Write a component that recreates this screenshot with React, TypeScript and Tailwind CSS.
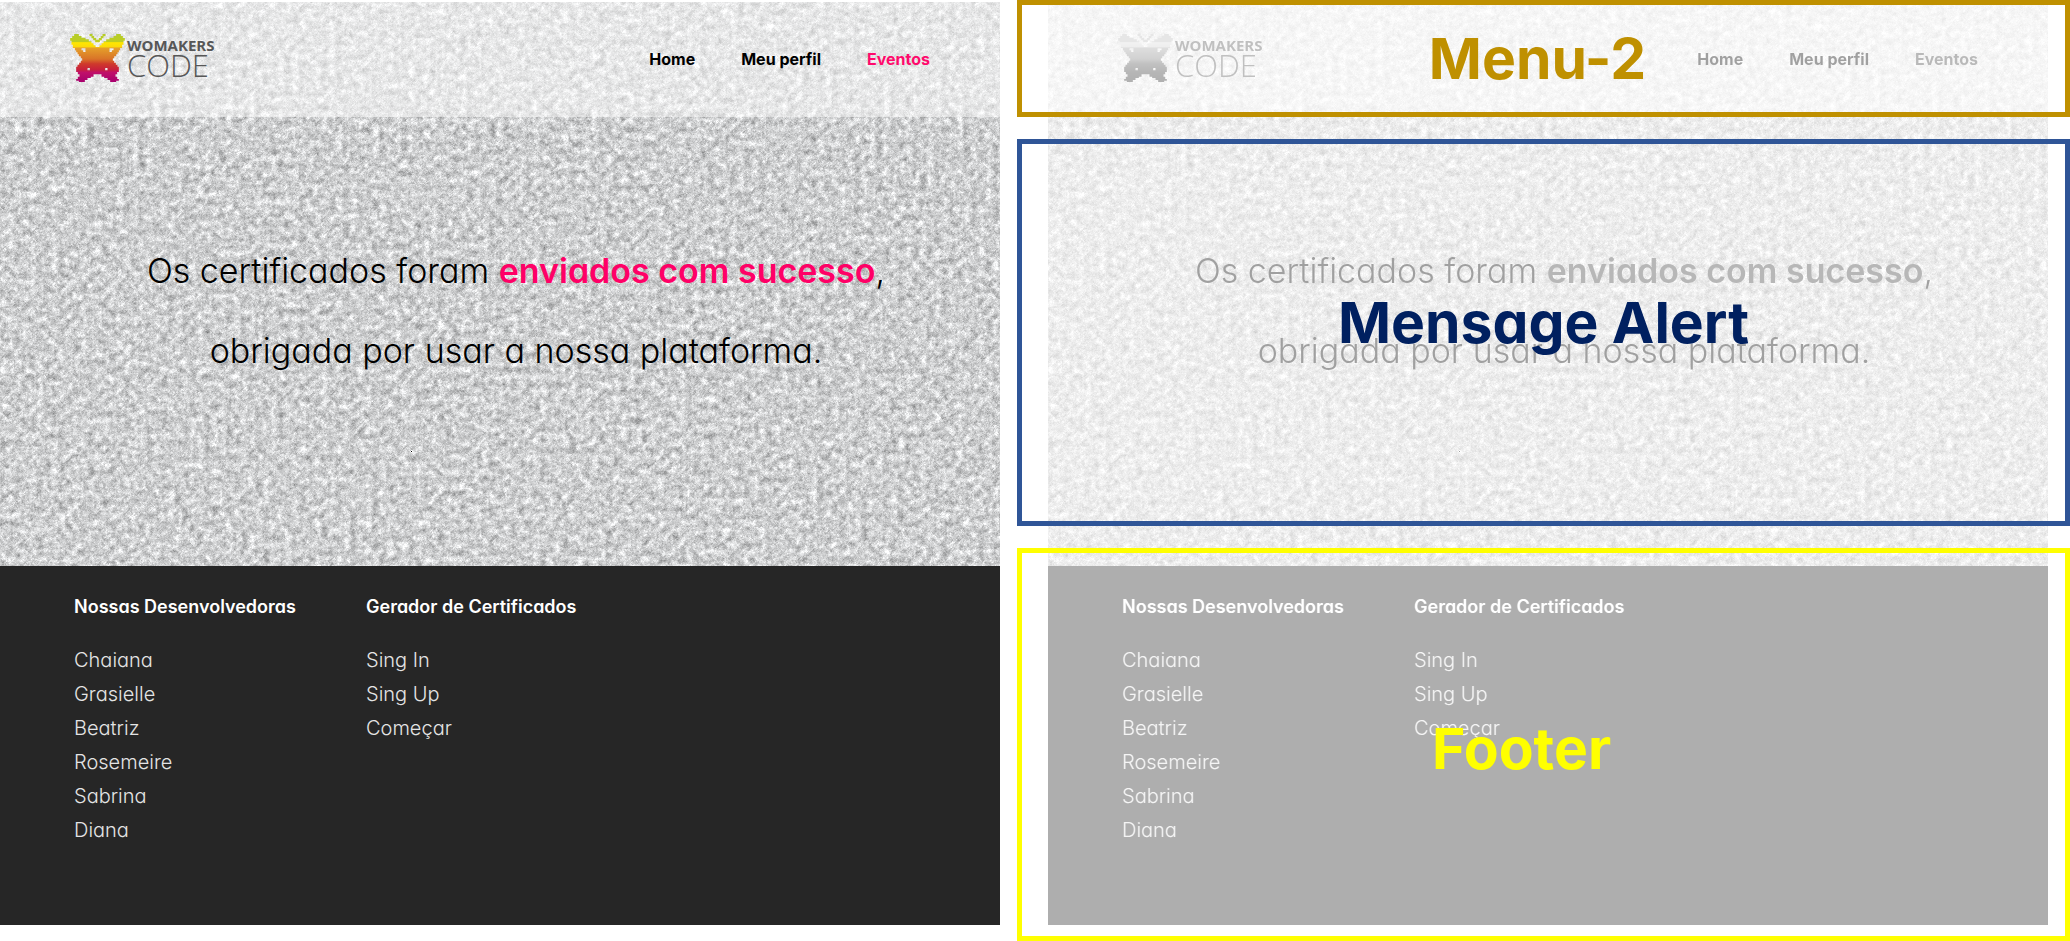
import { useId } from 'react';

const developers = ['Chaiana', 'Grasielle', 'Beatriz', 'Rosemeire', 'Sabrina', 'Diana'];
const generatorLinks = ['Sing In', 'Sing Up', 'Começar'];

function Texture() {
  const id = useId();
  return (
    <svg className="absolute inset-0 size-full" aria-hidden="true">
      <filter id={id} x="0" y="0" width="100%" height="100%" colorInterpolationFilters="sRGB">
        <feTurbulence type="fractalNoise" baseFrequency="0.137" numOctaves="4" seed="11" />
        <feColorMatrix values="0.3 0.3 0 0 0.508  0.3 0.3 0 0 0.512  0.3 0.3 0 0 0.516  0 0 0 0 1" />
        <feConvolveMatrix order="3" kernelMatrix="0 -0.6 0 -0.6 3.4 -0.6 0 -0.6 0" preserveAlpha="true" />
      </filter>
      <rect width="100%" height="100%" filter={`url(#${id})`} />
    </svg>
  );
}

function Butterfly() {
  const id = useId();
  return (
    <svg className="h-12 w-[55px]" viewBox="12 12 164 144" aria-hidden="true">
      <linearGradient id={id} gradientUnits="userSpaceOnUse" x1="0" y1="12" x2="0" y2="156">
        <stop offset="0" stopColor="#b5cc2a" />
        <stop offset="0.16" stopColor="#bccd22" />
        <stop offset="0.18" stopColor="#ffe600" />
        <stop offset="0.27" stopColor="#fbd90a" />
        <stop offset="0.29" stopColor="#e5a02a" />
        <stop offset="0.52" stopColor="#d97428" />
        <stop offset="0.62" stopColor="#cf3a2b" />
        <stop offset="0.74" stopColor="#c8203c" />
        <stop offset="0.8" stopColor="#c0106a" />
        <stop offset="1" stopColor="#a8006e" />
      </linearGradient>
      <path
        fill={`url(#${id})`}
        fillRule="evenodd"
        d="M24 12H38V18H46V23H58V28H68V34H76V40H82V46H88V51H100V46H106V40H112V34H120V28H130V23H142V18H150V12H164V18H170V24H176V32H172V44H168V54H162V61H158V67H154V73H150V79H144V85H140V92H144V98H149V104H154V110H158V126H153V133H148V140H153V147H158V152H150V156H132V150H124V144H114V140H106V133H82V140H74V144H64V150H56V156H38V152H30V147H35V140H40V133H35V126H30V110H34V104H39V98H44V92H48V85H44V79H38V73H34V67H30V61H26V54H20V44H16V32H12V24H18V18H24ZM46 55V61H51V66H58V55ZM130 55V66H137V61H142V55ZM64 114V121H71V114ZM117 114V121H124V114Z"
      />
      <path
        fill={`url(#${id})`}
        d="M70 12H79V18H84V24H90V29H98V24H104V18H109V12H118V19H112V25H107V31H101V37H87V31H81V25H76V19H70Z"
      />
    </svg>
  );
}

function Logo() {
  return (
    <a href="#" className="flex items-center gap-0.5">
      <Butterfly />
      <span className="flex flex-col font-['Open_Sans','Noto_Sans',sans-serif] text-[#575757]">
        <span className="text-[15px] leading-[14px] font-bold">WOMAKERS</span>
        <span className="text-[31px] leading-[26px] font-light">CODE</span>
      </span>
    </a>
  );
}

function FooterColumn({ title, items }: { title: string; items: string[] }) {
  return (
    <section>
      <h2 className="text-[18px] leading-[34px] font-semibold text-white">{title}</h2>
      <ul className="mt-[19px] text-[20px] leading-[34px] font-light text-[#e4e4e4]">
        {items.map((item) => (
          <li key={item}>
            <a href="#">{item}</a>
          </li>
        ))}
      </ul>
    </section>
  );
}

function Page() {
  return (
    <div>
      <div className="relative">
        <Texture />
        <header className="relative flex items-center justify-between bg-white/50 pt-8 pr-[70px] pb-[35px] pl-[70px]">
          <Logo />
          <nav className="flex gap-[46px] pt-0.5 text-[16px] font-bold text-black">
            <a href="#">Home</a>
            <a href="#">Meu perfil</a>
            <a href="#" className="text-[#ff0a6c]">
              Eventos
            </a>
          </nav>
        </header>
        <p className="relative px-4 pt-[114px] pb-[175px] pl-12 text-center text-[34px] leading-[80px] font-light text-black">
          Os certificados foram <strong className="font-semibold text-[#ff0066]">enviados com sucesso</strong>,
          <br />
          obrigada por usar a nossa plataforma.
        </p>
      </div>
      <footer className="grid grid-cols-[292px_1fr] bg-[#262626] pt-6 pb-[78px] pl-[74px]">
        <FooterColumn title="Nossas Desenvolvedoras" items={developers} />
        <FooterColumn title="Gerador de Certificados" items={generatorLinks} />
      </footer>
    </div>
  );
}

export default function App() {
  return (
    <main className="grid grid-cols-[1000fr_1053fr] gap-[17px] bg-white font-['Inter',sans-serif] [font-feature-settings:'cv11']">
      <div className="pt-0.5">
        <Page />
      </div>
      <div className="grid">
        <div className="pt-0.5 pr-[22px] pl-[31px] opacity-[0.373] grayscale [grid-area:1/1]">
          <Page />
        </div>
        <div className="pointer-events-none relative grid grid-rows-[117px_387px_393px] gap-[22px] text-[57px] leading-[70px] font-bold [grid-area:1/1]">
          <div className="flex items-center justify-center border-5 border-[#bf9000] pr-3 text-[#bf9000]">Menu-2</div>
          <div className="flex items-center justify-center border-5 border-[#2f5597] pb-5 text-[#002060]">
            Mensage Alert
          </div>
          <div className="flex items-center justify-center border-5 border-[#ffff00] pt-2 pr-11 text-[#ffff00]">
            Footer
          </div>
        </div>
      </div>
    </main>
  );
}
